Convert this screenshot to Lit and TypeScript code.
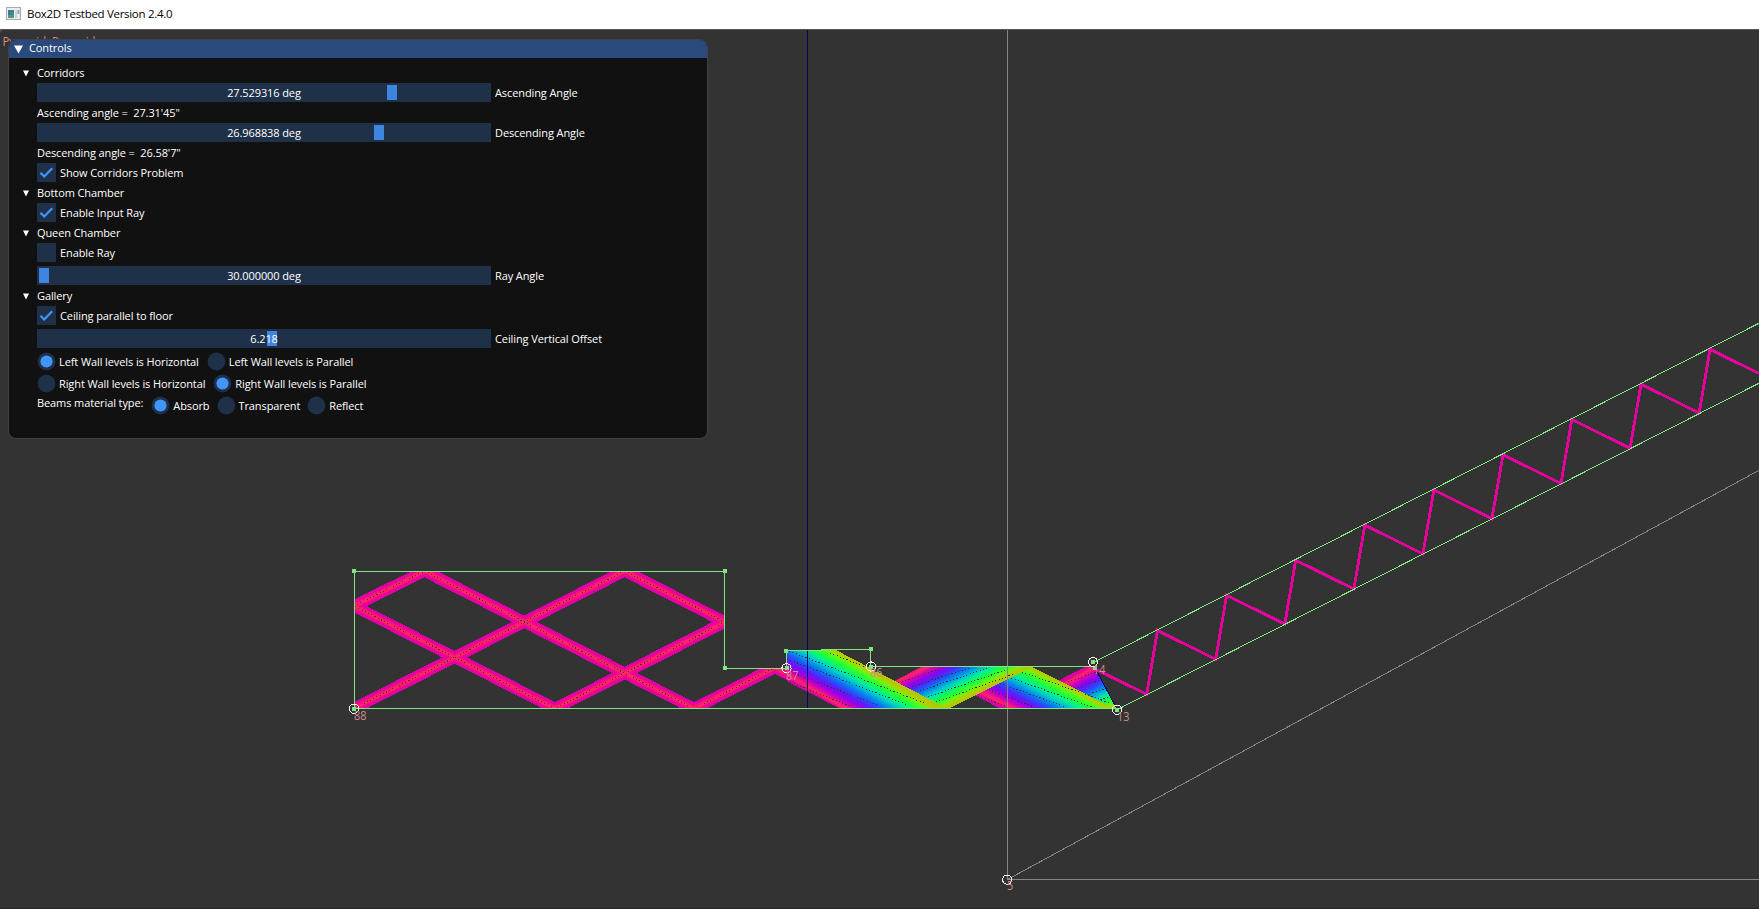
import { LitElement, html, css, svg } from "lit";
import { customElement, property } from "lit/decorators.js";

@customElement("tb-slider")
class TbSlider extends LitElement {
  @property() value = "";
  @property() label = "";
  @property({ type: Number }) grab = 0;
  static styles = css`
    :host { display: flex; height: 19px; }
    .track { position: relative; width: 454px; background: #1f3049; text-align: center; line-height: 20px; }
    .grab { position: absolute; top: 2px; width: 10px; height: 15px; background: #3e85e0; }
    .value { position: relative; }
    .label { margin-left: 4px; line-height: 20px; }
  `;
  render() {
    return html`<div class="track"><div class="grab" style="left:${this.grab}px"></div><span class="value">${this.value}</span></div><div class="label">${this.label}</div>`;
  }
}

@customElement("tb-check")
class TbCheck extends LitElement {
  @property() label = "";
  @property({ type: Boolean }) checked = false;
  static styles = css`
    :host { display: flex; height: 19px; line-height: 20px; }
    .box { width: 19px; height: 19px; background: #1f3049; margin-right: 4px; }
    svg { display: block; }
  `;
  render() {
    return html`<div class="box"><svg width="19" height="19">${this.checked ? svg`<path d="M3.5 9.8 L7.2 13.5 L15.2 5.3" fill="none" stroke="#4296fa" stroke-width="2.2"/>` : ""}</svg></div><span>${this.label}</span>`;
  }
}

@customElement("tb-radio")
class TbRadio extends LitElement {
  @property() label = "";
  @property({ type: Boolean }) checked = false;
  static styles = css`
    :host { display: flex; height: 19px; line-height: 20px; }
    svg { display: block; margin-right: 3px; }
  `;
  render() {
    return html`<svg width="19" height="19"><circle cx="9.5" cy="9.5" r="8.9" fill="#1f3049"/>${this.checked ? svg`<circle cx="9.5" cy="9.5" r="6.1" fill="#4296fa"/>` : ""}</svg><span>${this.label}</span>`;
  }
}

const BEAMS = [
  "354,708.5 624.5,571", "624.5,571 725,622", "725,622 555,708.5", "555,708.5 354,606",
  "354,606 424.5,571", "424.5,571 694,708.5", "694,708.5 775,667.5", "775,667.5 856,708.5",
];
const LAYERS: [string, number][] = [
  ["#dc00a8", 11.4], ["#e8009c", 8.4], ["#f30888", 6], ["#fb1774", 4], ["#ff2860", 2],
];
const HUES: [number, string][] = [
  [0, "#b4c800"], [0.06, "#a0dc00"], [0.12, "#50ff1e"], [0.21, "#1eff3c"], [0.3, "#00f096"],
  [0.38, "#00c8c8"], [0.46, "#0096e6"], [0.55, "#1e5aff"], [0.65, "#5a1eff"], [0.74, "#9600eb"],
  [0.82, "#d200b4"], [0.87, "#f0148c"], [0.92, "#ff285f"], [0.96, "#eb0096"], [1, "#d200af"],
];
type Ray = { id: string; g: number[]; pts: string; clip: string; dots: number[][] };
const RAYS: Ray[] = [
  { id: "r4", g: [1115, 708.5, 1090.4, 664.5], pts: "1001,710 1086,666.5 1120,666.5 1120,710", clip: "mouth",
    dots: [[1068, 682, 1110, 667], [1068, 691, 1110, 676], [1076, 699, 1112, 686], [1090, 703, 1118, 694]] },
  { id: "r3", g: [1031.5, 667, 1008.9, 711.5], pts: "920,666.5 1031.5,666.5 1117,710 1003,710", clip: "mouth",
    dots: [[1022, 672, 1110, 703], [1008, 677, 1092, 707], [990, 680, 1066, 707], [982, 687, 1034, 707], [978, 696, 1008, 707]] },
  { id: "r2", g: [943, 709.5, 920.4, 665], pts: "838,710 922,666.5 1032.5,666.5 946,710", clip: "hall",
    dots: [[895, 684, 940, 669], [905, 689, 972, 667], [920, 691, 990, 667], [928, 697, 1006, 670], [936, 702, 1014, 674]] },
  { id: "r1", g: [833, 648.5, 808, 692], pts: "787,650.5 835,649.5 948,709 841,709 786.5,681 786.5,651", clip: "room",
    dots: [[830, 653, 898, 680], [789, 651, 924, 703], [787, 659, 908, 705], [788, 671, 880, 706], [787, 681, 850, 706]] },
];
const ROOM = "354.5,571.5 724.5,571.5 724.5,668.5 786.5,668.5 786.5,650.5 821,649.5 870.5,649.5 870.5,666.5 1094,666.5 1117,709 354.5,709";
const ZIG = "1094,668.5 1146.7,694.3 1157.5,630.5 1215.7,659.3 1226.6,595.4 1284.8,624 1295.7,560.3 1353.9,589 1364.8,525.1 1422.9,553.9 1433.9,490 1491.9,518.7 1503,454.8 1561,483.4 1571.8,419.5 1630.1,448.3 1641,384.2 1699.2,413.1 1710,349.3 1759,373.5";
const KNOTS = [[354, 571], [725, 571], [725, 668], [354, 709], [786, 651], [786.7, 668], [871, 649], [871, 667], [1093, 662], [1094.7, 667.5], [1117, 709.5]];
const RINGS = [[354, 708.7], [786.5, 668.3], [871, 666.5], [1093, 662], [1117, 709.7], [1007.3, 879.7]];
const TAGS: [number, number, string][] = [[354, 719.5, "88"], [786, 679.5, "87"], [870, 677, "86"], [1093, 674, "14"], [1117, 720.5, "13"], [1007, 890, "5"]];

@customElement("tb-scene")
class TbScene extends LitElement {
  static styles = css`
    :host { display: block; }
    svg { display: block; background: #333; }
    .tag { font: 12px "Open Sans", "Noto Sans", sans-serif; fill: #d08c8c; }
  `;
  render() {
    return html`<svg width="1759" height="880" viewBox="0 29 1759 880">
      <defs>
        <clipPath id="room"><polygon points=${ROOM} /></clipPath>
        <clipPath id="mouth"><polygon points="354,666.5 1094.5,666.5 1117,709 354,709" /></clipPath>
        <clipPath id="hall"><rect x="830" y="666.5" width="290" height="42.5" /></clipPath>
        ${RAYS.map((r) => svg`<linearGradient id=${r.id} gradientUnits="userSpaceOnUse" x1=${r.g[0]} y1=${r.g[1]} x2=${r.g[2]} y2=${r.g[3]}>
          ${HUES.map(([o, c]) => svg`<stop offset=${o} stop-color=${c} />`)}</linearGradient>`)}
      </defs>
      <rect x="0" y="29" width="1759" height="1" fill="#555559" />
      <rect x="0" y="908" width="1759" height="1" fill="#2a2427" />
      <path d="M0.5 33 Q1 30 5 29.5 H0 Z" fill="#55585c" />
      <text class="tag" x="2.5" y="46.4" textLength="93" lengthAdjust="spacingAndGlyphs">Pyramid: Pyramid</text>

      <g clip-path="url(#room)" shape-rendering="crispEdges">
        ${LAYERS.map(([c, w]) => BEAMS.map((b) => svg`<polyline points=${b} stroke=${c} stroke-width=${w} stroke-linecap="square" fill="none" />`))}
        ${BEAMS.slice(0, 7).map((b) => svg`<polyline points=${b} stroke="#4a2b3c" stroke-width="1" stroke-dasharray="1 2.6" fill="none" />`)}
      </g>
      ${RAYS.map((r) => svg`<g clip-path="url(#${r.clip})" shape-rendering="crispEdges">
        <polygon points=${r.pts} fill="url(#${r.id})" />
        ${r.dots.map((d) => svg`<line x1=${d[0]} y1=${d[1]} x2=${d[2]} y2=${d[3]} stroke="#2c3338" stroke-width="1" stroke-dasharray="1.2 2.3" />`)}
      </g>`)}

      <g shape-rendering="crispEdges" fill="none" stroke-width="1">
        <path d="M807.5 30V708" stroke="#00006e" />
        <path d="M1095 668L1117 709" stroke="#00006e" />
        <polyline points=${ZIG} stroke="#e6009e" stroke-width="2.9" />
        <path d="M1007.5 30V879.5H1759M1007.5 879.5L1759 470.3" stroke="#868686" />
        <path d="M354.5 708.5V571.5H724.5V668.5H786.5V650.5H821V649.5H870.5V666.5H1094.5M354.5 708.5H1117" stroke="#80e680" />
        <path d="M1093.5 662.5L1759 323.2M1117.5 709.5L1759 383.2" stroke="#80e680" />
      </g>
      <g shape-rendering="crispEdges" fill="#80e680">${KNOTS.map(([x, y]) => svg`<rect x=${Math.round(x) - 2} y=${Math.round(y) - 2} width="4" height="4" />`)}</g>
      <g shape-rendering="crispEdges" fill="none" stroke="#f4f4f4" stroke-width="1.1">${RINGS.map(([x, y]) => svg`<circle cx=${x} cy=${y} r="4.6" />`)}</g>
      ${TAGS.map(([x, y, t]) => svg`<text class="tag" x=${x} y=${y} textLength=${t.length * 6.2} lengthAdjust="spacingAndGlyphs">${t}</text>`)}
    </svg>`;
  }
}

@customElement("app-root")
class AppRoot extends LitElement {
  static styles = css`
    :host { display: block; width: 1759px; height: 909px; overflow: hidden; background: #333; }
    .titlebar { display: flex; align-items: center; height: 29px; background: #fff; color: #000; box-sizing: border-box; padding: 0 0 3px 6px; gap: 6px;
      font: 11.5px "Open Sans", "Noto Sans", sans-serif; letter-spacing: -0.3px; }
    .title { display: block; line-height: 26px; padding-top: 1px; }
    .titlebar svg { display: block; }
    .stage { position: relative; height: 880px; }
    .panel { position: absolute; left: 8px; top: 10px; width: 700px; height: 400px; box-sizing: border-box; border: 1px solid #404049;
      border-radius: 8px; background: #111; overflow: hidden; color: #fff; font: 11px "Open Sans", "Noto Sans", sans-serif; letter-spacing: -0.1px; }
    .head { display: flex; align-items: center; gap: 6px; height: 18px; padding-left: 5px; background: #294a7a; color: #fff; line-height: 16px; }
    .head span { padding-bottom: 2px; }
    .head svg, .tree svg { display: block; }
    .body { padding: 5px 0 0 28px; }
    .tree { display: flex; align-items: center; gap: 8px; height: 20px; margin-left: -14px; line-height: 20px; }
    .text { height: 20px; line-height: 20px; white-space: pre; }
    .row { height: 20px; }
    .drop { padding-top: 3px; }
    .radios { display: flex; height: 19px; padding-top: 3px; gap: 8px; }
    .beams { gap: 7px; }
    .lift { line-height: 14px; margin-right: 1px; }
  `;
  tree(label: string) {
    return html`<div class="tree"><svg width="6" height="7"><path d="M0 0.5H6L3 6.5Z" fill="#fff" /></svg><span>${label}</span></div>`;
  }
  render() {
    return html`
      <div class="titlebar">
        <svg width="15" height="13"><rect x=".5" y=".5" width="14" height="12" fill="#e9edef" stroke="#a5abb0" /><rect x="2" y="3" width="6" height="8" fill="#3d8a83" /><path d="M2 3H5V11H2Z" fill="#3a7d9c" /><path d="M2 8H8V11H2Z" fill="#4c9b70" /><path d="M9 3h2v8h-2z" fill="#cfd4d8" /><path d="M11.5 3h2v4h-2z" fill="#8fa3ad" /></svg>
        <span class="title">Box2D Testbed Version 2.4.0</span>
      </div>
      <div class="stage">
        <tb-scene></tb-scene>
        <div class="panel">
          <div class="head"><svg width="9" height="9"><path d="M0 0.5H9L4.5 8.5Z" fill="#fff" /></svg><span>Controls</span></div>
          <div class="body">
            ${this.tree("Corridors")}
            <div class="row"><tb-slider value="27.529316 deg" label="Ascending Angle" .grab=${350}></tb-slider></div>
            <div class="text">Ascending angle =  27.31'45"</div>
            <div class="row"><tb-slider value="26.968838 deg" label="Descending Angle" .grab=${337}></tb-slider></div>
            <div class="text">Descending angle =  26.58'7"</div>
            <div class="row"><tb-check checked label="Show Corridors Problem"></tb-check></div>
            ${this.tree("Bottom Chamber")}
            <div class="row"><tb-check checked label="Enable Input Ray"></tb-check></div>
            ${this.tree("Queen Chamber")}
            <div class="row"><tb-check label="Enable Ray"></tb-check></div>
            <div class="row drop"><tb-slider value="30.000000 deg" label="Ray Angle" .grab=${2}></tb-slider></div>
            ${this.tree("Gallery")}
            <div class="row"><tb-check checked label="Ceiling parallel to floor"></tb-check></div>
            <div class="row drop"><tb-slider value="6.218" label="Ceiling Vertical Offset" .grab=${230}></tb-slider></div>
            <div class="radios"><tb-radio checked label="Left Wall levels is Horizontal"></tb-radio><tb-radio label="Left Wall levels is Parallel"></tb-radio></div>
            <div class="radios"><tb-radio label="Right Wall levels is Horizontal"></tb-radio><tb-radio checked label="Right Wall levels is Parallel"></tb-radio></div>
            <div class="radios beams"><span class="lift">Beams material type:</span><tb-radio checked label="Absorb"></tb-radio><tb-radio label="Transparent"></tb-radio><tb-radio label="Reflect"></tb-radio></div>
          </div>
        </div>
      </div>`;
  }
}
